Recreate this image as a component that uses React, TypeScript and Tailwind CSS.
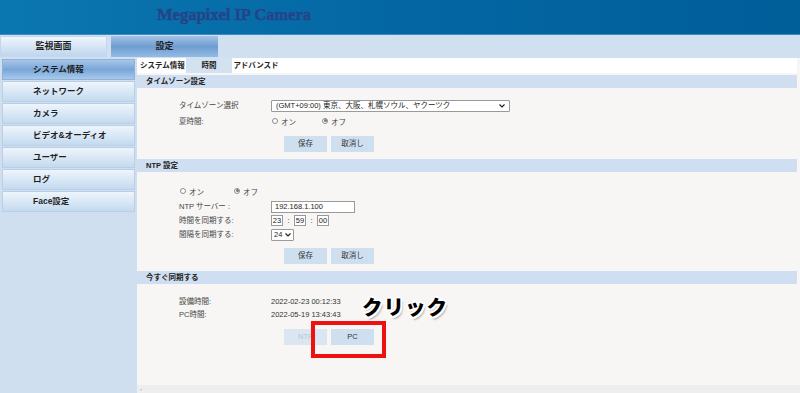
import React from 'react';

const jp = { fontFamily: '"Liberation Sans", "Noto Sans CJK JP", sans-serif' };

const menu = ['システム情報', 'ネットワーク', 'カメラ', 'ビデオ&オーディオ', 'ユーザー', 'ログ', 'Face設定'];

function Radio({ checked, label }: { checked?: boolean; label: string }) {
  return (
    <span className="flex items-center">
      <span className="w-[6px] h-[6px] rounded-full border border-[#8a8a8a] bg-white flex items-center justify-center -mt-[3px]">
        {checked && <span className="w-[3px] h-[3px] rounded-full bg-[#777]" />}
      </span>
      <span className="ml-[3px] mt-[2px]">{label}</span>
    </span>
  );
}

function Btn({ label, disabled }: { label: string; disabled?: boolean }) {
  return (
    <div
      className={
        'w-[43px] h-[16px] flex items-center justify-center text-[7.5px] ' +
        (disabled ? 'bg-[#dbe6f1] text-[#b5c5d6]' : 'bg-[#cedff0] text-[#333]')
      }
    >
      {label}
    </div>
  );
}

function SectionHead({ title }: { title: string }) {
  return (
    <div className="h-[13px] bg-[#cfdef0] flex items-center pl-[9px] text-[7.5px] font-bold text-[#222]">
      {title}
    </div>
  );
}

function Row({ label, children, h = 'h-[12px]' }: { label: string; children: React.ReactNode; h?: string }) {
  return (
    <div className={'flex items-center ' + h}>
      <div className="w-[92px] shrink-0">{label}</div>
      <div className="flex items-center">{children}</div>
    </div>
  );
}

export default function App() {
  return (
    <div className="w-[800px] h-[393px] overflow-hidden flex flex-col bg-[#f7f6f4] text-[#444]" style={jp}>
      {/* Header */}
      <div className="h-[35px] shrink-0 bg-gradient-to-r from-[#0b77b0] via-[#0467a3] to-[#005e99] border-b border-[#3a8dc2] flex items-center">
        <span
          className="ml-[157px] -mt-[3px] text-[16.5px] font-bold text-[#1c468a]"
          style={{
            fontFamily: '"Liberation Serif", serif',
            WebkitTextStroke: '0.7px #1c468a',
            textShadow: '0 0 1px #4a8cc8',
          }}
        >
          Megapixel IP Camera
        </span>
      </div>

      {/* Top tabs */}
      <div className="h-[23px] shrink-0 bg-[#d0e0f0] flex items-stretch pt-px pb-px gap-[4px] text-[9px] font-bold text-[#1f1f1f]">
        <div className="w-[107px] flex items-center justify-center bg-gradient-to-b from-[#eef5fc] to-[#bfd6ee] border border-[#c3d6ea]">
          監視画面
        </div>
        <div className="w-[107px] flex items-center justify-center bg-gradient-to-b from-[#a4c3e5] via-[#6e9dd1] to-[#93bce4]">
          設定
        </div>
      </div>

      <div className="flex-1 flex min-h-0">
        {/* Sidebar */}
        <div className="w-[137px] shrink-0 bg-[#cfdff0] flex flex-col gap-px px-[2px] pt-px">
          {menu.map((m, i) => (
            <div
              key={m}
              className={
                'h-[21px] flex items-center pl-[30px] text-[8.5px] font-bold text-[#1f1f1f] border ' +
                (i === 0
                  ? 'bg-gradient-to-b from-[#a8c6e7] via-[#79a6d8] to-[#a9c9ea] border-[#8fb2da]'
                  : 'bg-gradient-to-b from-[#eef5fc] via-[#d9e8f6] to-[#c4daef] border-[#b9cfe6]')
              }
            >
              {m}
            </div>
          ))}
        </div>

        {/* Main */}
        <div className="flex-1 flex flex-col min-w-0 pr-[3px] text-[7.5px]">
          <div className="h-[15px] shrink-0 flex items-stretch bg-white text-[7.5px] font-bold text-[#222]">
            <div className="w-[49px] flex items-center pl-[3px]">システム情報</div>
            <div className="w-[46px] flex items-center justify-center bg-[#d3e2f1]">時間</div>
            <div className="w-[48px] flex items-center justify-center">アドバンスド</div>
          </div>

          <div className="mt-[2px]">
            <SectionHead title="タイムゾーン設定" />
            <div className="h-[71px] pl-[42px] pt-[12px]">
              <Row label="タイムゾーン選択">
                <div className="w-[239px] h-[12px] bg-white border border-[#9a9a9a] rounded-[1px] flex items-center justify-between pl-[4px] pr-[4px] text-[#222]">
                  <span>(GMT+09:00) 東京、大阪、札幌ソウル、ヤクーツク</span>
                  <svg width="6" height="4" viewBox="0 0 6 4"><path d="M0.5 0.5 L3 3 L5.5 0.5" stroke="#222" strokeWidth="1.2" fill="none" /></svg>
                </div>
              </Row>
              <div className="mt-[4px]">
                <Row label="夏時間:">
                  <div className="flex items-center gap-[26px] pl-px">
                    <Radio label="オン" />
                    <Radio checked label="オフ" />
                  </div>
                </Row>
              </div>
              <div className="mt-[8px] ml-[105px] flex gap-[4px]">
                <Btn label="保存" />
                <Btn label="取消し" />
              </div>
            </div>
          </div>

          <div>
            <SectionHead title="NTP 設定" />
            <div className="h-[99px] pl-[42px] pt-[14px]">
              <div className="h-[12px] flex items-center gap-[30px] pl-px">
                <Radio label="オン" />
                <Radio checked label="オフ" />
              </div>
              <div className="mt-[2px]">
                <Row label="NTP サーバー :" h="h-[13px]">
                  <div className="w-[84px] h-[12px] bg-white border border-[#9a9a9a] flex items-center pl-[3px] text-[#222]">
                    192.168.1.100
                  </div>
                </Row>
              </div>
              <div className="mt-px">
                <Row label="時間を同期する:" h="h-[13px]">
                  {['23', '59', '00'].map((v, i) => (
                    <React.Fragment key={v}>
                      {i > 0 && <span className="w-[11px] text-center text-[#222]">:</span>}
                      <div className="w-[12px] h-[11px] bg-white border border-[#9a9a9a] flex items-center justify-center text-[#222]">
                        {v}
                      </div>
                    </React.Fragment>
                  ))}
                </Row>
              </div>
              <div className="mt-px">
                <Row label="間隔を同期する:" h="h-[13px]">
                  <div className="w-[23px] h-[12px] bg-white border border-[#9a9a9a] rounded-[1px] flex items-center justify-between px-[2px] text-[#222]">
                    <span>24</span>
                    <svg width="6" height="4" viewBox="0 0 6 4"><path d="M0.5 0.5 L3 3 L5.5 0.5" stroke="#222" strokeWidth="1.2" fill="none" /></svg>
                  </div>
                </Row>
              </div>
              <div className="mt-[7px] ml-[105px] flex gap-[4px]">
                <Btn label="保存" />
                <Btn label="取消し" />
              </div>
            </div>
          </div>

          <div className="flex-1 flex flex-col">
            <SectionHead title="今すぐ同期する" />
            <div className="flex-1 pl-[42px] pt-[12px]">
              <Row label="設備時間:">
                <span className="text-[#333]">2022-02-23 00:12:33</span>
              </Row>
              <div className="mt-px">
                <Row label="PC時間:">
                  <span className="text-[#333]">2022-05-19 13:43:43</span>
                </Row>
              </div>
              <div className="mt-[8px] ml-[105px] flex gap-[4px]">
                <Btn label="NTP" disabled />
                <div className="relative">
                  <Btn label="PC" />
                  <div className="absolute left-[-20px] top-[-8px] w-[75px] h-[37px] border-[4px] border-[#ee1111]" />
                  <div
                    className="absolute left-[31px] top-[-38px] text-[20.5px] font-black text-black whitespace-nowrap tracking-[1px]"
                    style={{
                      fontFamily: '"Noto Sans CJK JP", sans-serif',
                      textShadow:
                        '2px 0 0 #fff, -2px 0 0 #fff, 0 2px 0 #fff, 0 -2px 0 #fff, 1.5px 1.5px 0 #fff, -1.5px -1.5px 0 #fff, 1.5px -1.5px 0 #fff, -1.5px 1.5px 0 #fff, 2px 3px 2px rgba(0,0,0,0.35)',
                    }}
                  >
                    クリック
                  </div>
                </div>
              </div>
            </div>
            <div className="h-[8px] shrink-0 bg-[#eeeeee] flex items-center pl-[3px] -mr-[3px]">
              <span className="text-[6px] text-[#aaa] leading-none">‹</span>
            </div>
          </div>
        </div>
      </div>
    </div>
  );
}
